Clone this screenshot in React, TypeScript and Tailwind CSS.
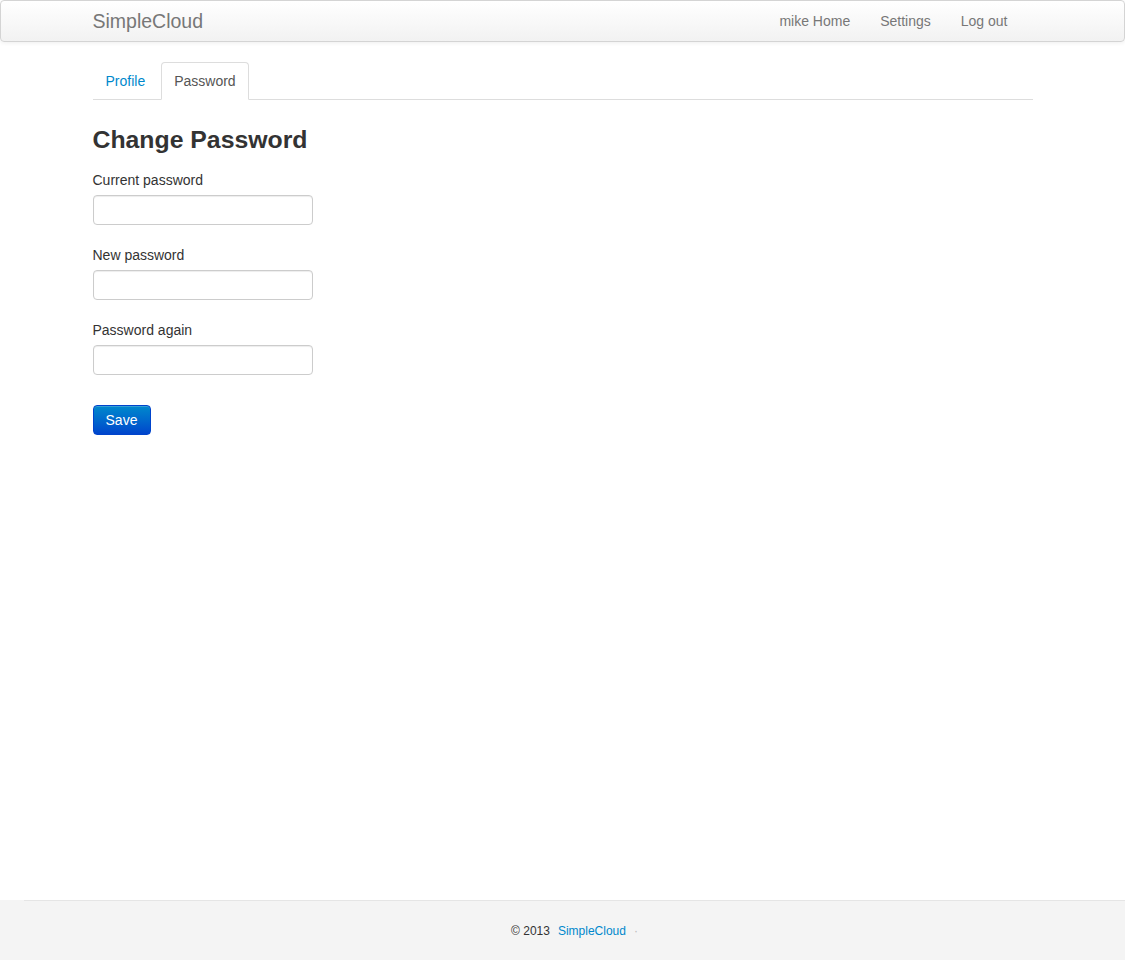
import { useState } from "react";

const fields = [
  { id: "current", label: "Current password" },
  { id: "new", label: "New password" },
  { id: "again", label: "Password again" },
];

const NavBar = () => (
  <div className="h-[42px] border border-[#d4d4d4] rounded bg-gradient-to-b from-white to-[#f2f2f2] shadow-[0_1px_4px_rgba(0,0,0,0.065)]">
    <div className="w-[940px] mx-auto flex items-center justify-between h-10">
      <a className="text-[19.5px] leading-5 text-[#777] py-[10px]">SimpleCloud</a>
      <ul className="flex mr-[10px]">
        {["mike Home", "Settings", "Log out"].map((item) => (
          <li key={item}>
            <a className="block px-[15px] py-[10px] leading-5 text-[14px] text-[#777]">{item}</a>
          </li>
        ))}
      </ul>
    </div>
  </div>
);

const Tabs = () => (
  <ul className="flex border-b border-[#ddd] mt-5 mb-5">
    <li className="-mb-px">
      <a className="block px-3 py-2 leading-5 text-[14px] text-[#0088cc] border border-transparent rounded-t">
        Profile
      </a>
    </li>
    <li className="-mb-px ml-[3px]">
      <a className="block px-3 py-2 leading-5 text-[14px] text-[#555] bg-white border border-[#ddd] border-b-transparent rounded-t">
        Password
      </a>
    </li>
  </ul>
);

export default function App() {
  const [values, setValues] = useState<Record<string, string>>({});

  return (
    <div className="h-screen flex flex-col bg-white text-[#333] font-['Liberation_Sans',Arial,sans-serif]">
      <NavBar />

      <main className="flex-1">
        <div className="w-[940px] mx-auto">
          <Tabs />
          <h2 className="text-[24.8px] font-bold leading-10 mb-[10px]">Change Password</h2>
          <form onSubmit={(e) => e.preventDefault()}>
            {fields.map((f) => (
              <div key={f.id} className="mb-5">
                <label htmlFor={f.id} className="block text-[14px] leading-5 mb-[5px]">
                  {f.label}
                </label>
                <input
                  id={f.id}
                  type="password"
                  value={values[f.id] ?? ""}
                  onChange={(e) => setValues({ ...values, [f.id]: e.target.value })}
                  className="w-[220px] h-[30px] px-[6px] text-[14px] border border-[#ccc] rounded bg-white shadow-[inset_0_1px_1px_rgba(0,0,0,0.075)] outline-none"
                />
              </div>
            ))}
            <button
              type="submit"
              className="mt-[10px] h-[30px] w-[58px] text-[14px] text-white rounded border border-[#0044cc] bg-gradient-to-b from-[#0088cc] to-[#0044cc] shadow-[inset_0_1px_0_rgba(255,255,255,0.2)]"
            >
              Save
            </button>
          </form>
        </div>
      </main>

      <footer className="h-[60px] bg-[#f4f4f4]">
        <div className="ml-6 h-full border-t border-[#e5e5e5] flex items-center justify-center text-[12px]">
          <span>© 2013</span>
          <a className="ml-2 text-[#0088cc]">SimpleCloud</a>
          <span className="ml-2 text-[#bbb]">·</span>
        </div>
      </footer>
    </div>
  );
}
